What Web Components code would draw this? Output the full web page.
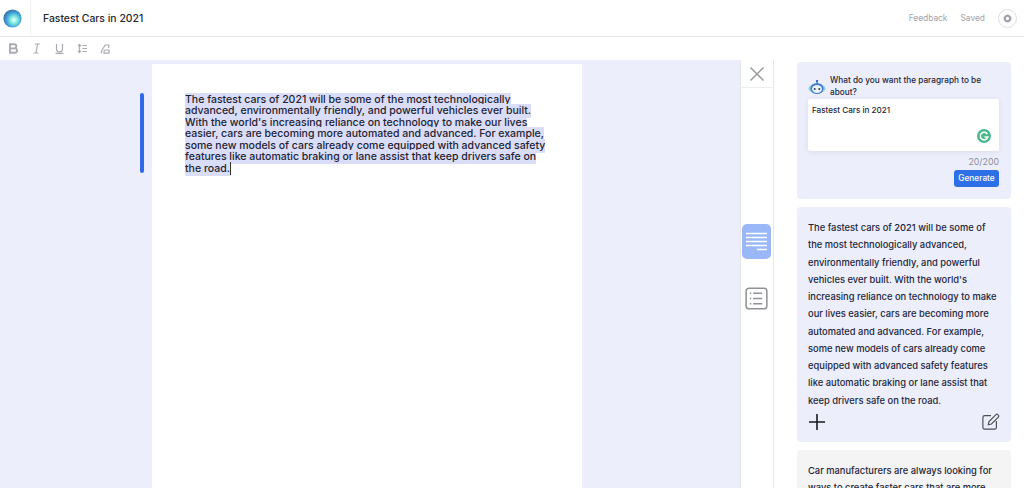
<!DOCTYPE html>
<html lang="en"><head><meta charset="utf-8"><title>Fastest Cars in 2021</title>
<style>
html,body{margin:0;padding:0;height:488px;overflow:hidden;background:#fff;font-family:Inter,"Liberation Sans",sans-serif;color:#1d2130}
</style></head><body>
<app-root></app-root>
<script>
function def(name, css, html){
  customElements.define(name, class extends HTMLElement{
    constructor(){super();const r=this.attachShadow({mode:'open'});r.innerHTML='<style>'+css+'</style>'+html;}
  });
}
def('app-logo',`:host{display:flex;width:31px;height:36px;align-items:center;padding-left:3px;box-sizing:border-box;border-right:1px solid #f3f3f3}`,
`<svg width="19" height="19" viewBox="0 0 20 20"><defs><radialGradient id="g" cx="58%" cy="58%" r="55%"><stop offset="0" stop-color="#f0fffc"/><stop offset=".35" stop-color="#80ecdf"/><stop offset=".75" stop-color="#3fa0d8"/><stop offset="1" stop-color="#3a78b0"/></radialGradient></defs><circle cx="10" cy="10" r="9.600" fill="url(#g)"/></svg>`);
def('app-header',`:host{display:flex;align-items:center;height:37px;box-sizing:border-box;border-bottom:1px solid #e6e6e9;background:#fff}
.t{margin-left:12px;font-size:10.400px;font-weight:500;color:#24262e;flex:1}
.m{font-size:8.400px;color:#a2a4ab;margin-right:13px}
.o{width:17px;height:17px;border:1px solid #dedee2;border-radius:50%;display:flex;align-items:center;justify-content:center;margin:0 7px 0 0}`,
`<app-logo></app-logo><span class="t">Fastest Cars in 2021</span><span class="m">Feedback</span><span class="m">Saved</span><span class="o"><svg width="9" height="9" viewBox="0 0 10 10"><circle cx="5" cy="5" r="2.900" fill="none" stroke="#9b9da4" stroke-width="2"/><circle cx="5" cy="5" r="4.200" fill="none" stroke="#9b9da4" stroke-width="1" stroke-dasharray="1.300 1.300"/></svg></span>`);
def('app-toolbar',`:host{display:flex;align-items:center;height:23px;background:#fff;padding-left:8px;gap:12px}
svg{width:11px;height:11px;fill:none;stroke:#a9abb2;stroke-width:1.200;flex:none}`,
`<svg viewBox="0 0 11 11" style="stroke-width:1.900"><path d="M2 1.200h4.200a2 2 0 0 1 0 4.200H2zM2 5.400h4.800a2.200 2.200 0 0 1 0 4.400H2z"/></svg>
<svg viewBox="0 0 11 11"><path d="M4 1h5M2.500 10h5M6.500 1L5 10"/></svg>
<svg viewBox="0 0 11 11"><path d="M2.500 1v5a3 3 0 0 0 6 0V1M1.500 10.400h8"/></svg>
<svg viewBox="0 0 11 11"><path d="M2.500 1.500v8M1 3l1.500-1.500L4 3M1 8l1.500 1.500L4 8M5.500 2.500H10M5.500 5.500H10M5.500 8.500H10"/></svg>
<svg viewBox="0 0 11 11"><path d="M1 10.200l1.200-3.500 3-4.700h3.500v3M4 10.200V8.500a1.500 1.500 0 0 1 1.500-1.500h3.500v3.200z"/></svg>`);
def('sel-line',`:host{display:block;height:11.450px;line-height:11.450px;white-space:pre}
span{background:#d9ddf7;display:inline;padding:0 0 1px}
i{border-right:1px solid #333;margin-left:0}`,`<span><slot></slot></span>`);
def('doc-page',`:host{display:block;position:relative;width:430px;height:430px;background:#fff;box-sizing:border-box;padding:30px 0 0 33px;font-size:10.530px;font-weight:500;color:#1f2333}
.bar{position:absolute;left:-12px;top:29px;width:4px;height:80px;border-radius:2px;background:#2f6ae8}
.caret{border-right:1px solid #333}`,
`<div class="bar"></div>
<sel-line>The fastest cars of 2021 will be some of the most technologically</sel-line>
<sel-line>advanced, environmentally friendly, and powerful vehicles ever built.</sel-line>
<sel-line>With the world's increasing reliance on technology to make our lives</sel-line>
<sel-line>easier, cars are becoming more automated and advanced. For example,</sel-line>
<sel-line>some new models of cars already come equipped with advanced safety</sel-line>
<sel-line>features like automatic braking or lane assist that keep drivers safe on</sel-line>
<sel-line><span class="caret">the road.</span></sel-line>`);
def('doc-editor',`:host{display:block;flex:none;width:740px;height:428px;background:#eceefb;padding:4px 0 0 152px;box-sizing:border-box;overflow:hidden}`,`<doc-page></doc-page>`);
def('side-rail',`:host{display:flex;flex-direction:column;align-items:center;flex:none;width:34px;box-sizing:border-box;height:428px;border-left:1px solid #e6e6e9;border-right:1px solid #e6e6e9;background:#fff}
.x{height:27px;width:100%;border-bottom:1px solid #eeeef0;display:flex;align-items:center;justify-content:center}
.a{margin:136px 1px 0 0;width:29px;height:35px;border-radius:5px;background:#9ab7f7;display:flex;align-items:center;justify-content:center}
.b{margin:28px 1px 0 0;display:block}`,
`<div class="x"><svg width="16" height="16" viewBox="0 0 16 16" fill="none" stroke="#9a9a9a" stroke-width="1.500" style="margin-right:1px"><path d="M1.500 1.500l13 13M14.500 1.500l-13 13"/></svg></div>
<div class="a"><svg width="21" height="21" viewBox="0 0 21 21" stroke="#fff" stroke-width="1.500" fill="none"><path d="M0 2.500h21M0 6.500h21M0 10.500h21M0 14.500h21M11 18.500h10"/></svg></div>
<svg class="b" width="23" height="23" viewBox="0 0 24 24" fill="none" stroke="#929296" stroke-width="1.600"><rect x="1.200" y="1.200" width="21.600" height="21.600" rx="3"/><path d="M8.500 6.500h9.500M8.500 12h9.500M8.500 17.500h9.500"/><path d="M5 6.500h1.500M5 12h1.500M5 17.500h1.500"/></svg>`);
def('prompt-card',`:host{display:block;background:#eceefb;border-radius:4px;padding:13px 12px 12px 11px;height:137px;box-sizing:border-box;font-size:8.250px;color:#23263a}
.q{display:flex;gap:4px;line-height:11.500px;font-weight:500}
.q svg{flex:none;margin-top:5px}
.q div{width:165px}
.box{position:relative;height:52px;margin-top:1px;background:#fff;border-radius:2px;box-shadow:0 1px 5px rgba(80,90,140,.12);padding:6px 4px;box-sizing:border-box;font-size:8.100px;font-weight:500;line-height:11px}
.gr{position:absolute;right:8px;bottom:8px;width:14px;height:14px}
.c{text-align:right;color:#8d8f99;font-size:8.800px;margin-top:5px;line-height:11px}
.r{display:flex;justify-content:flex-end;margin-top:3px}
button{all:unset;background:#2c6fe7;color:#fff;font:500 8.300px Inter,sans-serif;height:17px;width:45px;border-radius:3px;text-align:center;line-height:17px}`,
`<div class="q"><svg width="18" height="15" viewBox="0 0 18 15"><path d="M9 0v3" stroke="#4f86d9" stroke-width="1.500"/><circle cx="9" cy="1" r="1.200" fill="#3a6fc4"/><ellipse cx="9" cy="8.500" rx="8.500" ry="4.500" fill="#8fcde6"/><ellipse cx="9" cy="8.500" rx="6.500" ry="5.500" fill="#3f7bd0"/><ellipse cx="9" cy="9" rx="5" ry="4" fill="#eaf3fb"/><circle cx="6.700" cy="9" r="1" fill="#2b3f66"/><circle cx="11.300" cy="9" r="1" fill="#2b3f66"/></svg><div>What do you want the paragraph to be about?</div></div>
<div class="box">Fastest Cars in 2021<svg class="gr" viewBox="0 0 14 14"><circle cx="7" cy="7" r="7" fill="#4cb98c"/><path d="M10.300 5A3.800 3.800 0 1 0 10.800 8H7.500" fill="none" stroke="#fff" stroke-width="1.500"/></svg></div>
<div class="c">20/200</div><div class="r"><button>Generate</button></div>`);
def('result-card',`:host{display:block;background:var(--bg,#eceefb);border-radius:4px;padding:12px 11px 0;box-sizing:border-box;font-size:9.350px;line-height:17.250px;font-weight:500;color:#23263a;height:var(--h,235px);overflow:hidden;flex:none}
.t{width:191px}
.f{display:flex;justify-content:space-between;align-items:center;margin-top:4px}
.f svg{display:block}`,
`<div class="t"><slot></slot></div><div class="f"><svg width="18" height="18" viewBox="0 0 18 18" stroke="#16181f" stroke-width="1.600" fill="none"><path d="M9 1v16M1 9h16"/></svg><svg width="18" height="18" viewBox="0 0 20 20" fill="none" stroke="#4c4d53" stroke-width="1.300"><path d="M10 3H3a2 2 0 0 0-2 2v11a2 2 0 0 0 2 2h11a2 2 0 0 0 2-2V9"/><path d="M7 13l.8-3.500L15.500 1.800a1.500 1.500 0 0 1 2.200 0l.5.5a1.500 1.500 0 0 1 0 2.200L10.500 12.200z"/></svg></div>`);
def('side-panel',`:host{display:flex;flex-direction:column;gap:8px;flex:1;height:428px;padding:2px 13px 0 23px;box-sizing:border-box;overflow:hidden;background:#fff}`,
`<prompt-card></prompt-card>
<result-card>The fastest cars of 2021 will be some of the most technologically advanced, environmentally friendly, and powerful vehicles ever built. With the world's increasing reliance on technology to make our lives easier, cars are becoming more automated and advanced. For example, some new models of cars already come equipped with advanced safety features like automatic braking or lane assist that keep drivers safe on the road.</result-card>
<result-card style="--bg:#f4f4f5;--h:120px">Car manufacturers are always looking for ways to create faster cars that are more</result-card>`);
def('app-root',`:host{display:block;width:1024px;height:488px;overflow:hidden}
.main{display:flex;height:428px}`,
`<app-header></app-header><app-toolbar></app-toolbar><div class="main"><doc-editor></doc-editor><side-rail></side-rail><side-panel></side-panel></div>`);
</script>
</body></html>
